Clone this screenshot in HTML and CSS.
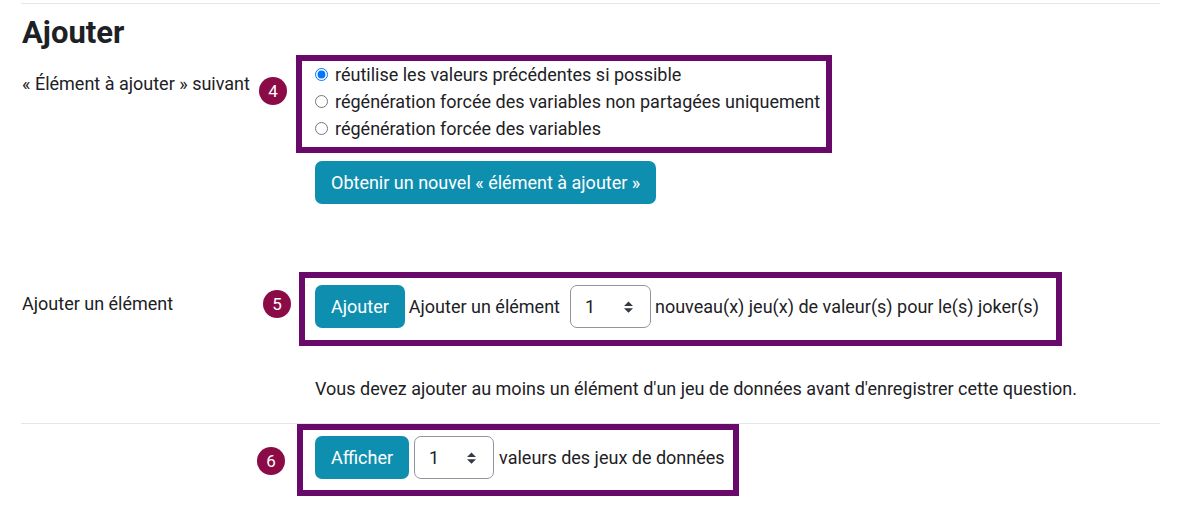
FILE: index.html
```html
<!DOCTYPE html>
<html lang="fr">
<head>
<meta charset="utf-8">
<title>Ajouter</title>
<link rel="stylesheet" href="styles.css">
</head>
<body>
<div class="page">
  <div class="topline"></div>
  <h2 class="title">Ajouter</h2>

  <div class="field-row row-next">
    <div class="field-label">« Élément à ajouter » suivant</div>
    <div class="badge badge-4">4</div>
    <div class="field-content">
      <div class="callout callout-radios">
        <label class="radio-row"><input type="radio" name="next" checked><span>réutilise les valeurs précédentes si possible</span></label>
        <label class="radio-row"><input type="radio" name="next"><span>régénération forcée des variables non partagées uniquement</span></label>
        <label class="radio-row"><input type="radio" name="next"><span>régénération forcée des variables</span></label>
      </div>
      <button class="btn btn-get">Obtenir un nouvel « élément à ajouter »</button>
    </div>
  </div>

  <div class="field-row row-add">
    <div class="field-label">Ajouter un élément</div>
    <div class="badge badge-5">5</div>
    <div class="field-content">
      <div class="callout callout-add">
        <button class="btn">Ajouter</button>
        <span class="inline-text text-gap">Ajouter un élément</span>
        <div class="fake-select">
          <span>1</span>
          <svg class="caret" width="9" height="12" viewBox="0 0 4 5"><path d="M2 0L0 2h4zm0 5L0 3h4z" fill="#343a40"/></svg>
        </div>
        <span class="inline-text">nouveau(x) jeu(x) de valeur(s) pour le(s) joker(s)</span>
      </div>
      <p class="notice">Vous devez ajouter au moins un élément d'un jeu de données avant d'enregistrer cette question.</p>
    </div>
  </div>

  <div class="divider"></div>

  <div class="field-row row-show">
    <div class="field-label"></div>
    <div class="badge badge-6">6</div>
    <div class="field-content">
      <div class="callout callout-show">
        <button class="btn">Afficher</button>
        <div class="fake-select fake-select-narrow">
          <span>1</span>
          <svg class="caret" width="9" height="12" viewBox="0 0 4 5"><path d="M2 0L0 2h4zm0 5L0 3h4z" fill="#343a40"/></svg>
        </div>
        <span class="inline-text">valeurs des jeux de données</span>
      </div>
    </div>
  </div>
</div>
</body>
</html>
```

FILE: styles.css
```css
* {
  box-sizing: border-box;
}

html, body {
  margin: 0;
  padding: 0;
  background: #ffffff;
}

body {
  font-family: Roboto, "Liberation Sans", Arial, sans-serif;
  font-size: 18px;
  line-height: 24px;
  color: #1d2125;
}

.page {
  padding: 3px 40px 0 21px;
}

.topline {
  border-top: 1px solid #e4e6e8;
}

.title {
  margin: 10px 0 4px 1px;
  font-size: 31px;
  line-height: 37px;
  font-weight: 700;
  color: #1d2125;
}

.field-row {
  display: flex;
  align-items: flex-start;
}

.field-label {
  width: 238px;
  flex: 0 0 238px;
  padding-left: 1px;
}

.row-next .field-label {
  padding-top: 17px;
}

.row-add .field-label {
  padding-top: 20px;
}

.badge {
  flex: 0 0 28px;
  width: 28px;
  height: 28px;
  border-radius: 50%;
  background: #8b0b47;
  color: #ffffff;
  font-size: 17px;
  line-height: 28px;
  text-align: center;
}

.badge-4 {
  margin-top: 22px;
}

.badge-5 {
  margin-top: 18px;
  margin-left: 4px;
}

.badge-6 {
  margin-top: 23px;
  margin-left: -2px;
}

.field-content {
  display: flex;
  flex-direction: column;
  align-items: flex-start;
}

.callout {
  border: 6px solid #690a6b;
  background: #ffffff;
}

.callout-radios {
  margin-left: 9px;
  padding: 0 6px 5px 13px;
}

.radio-row {
  display: flex;
  align-items: center;
  height: 27px;
}

.radio-row input {
  margin: 0 7px 0 0;
  width: 13px;
  height: 13px;
}

.btn {
  border: 0;
  border-radius: 7px;
  background: #0f8fb0;
  color: #ffffff;
  font-family: inherit;
  font-size: 18px;
  line-height: 25px;
  padding: 9px 16px;
  height: 43px;
  cursor: pointer;
}

.btn-get {
  margin-top: 8px;
  margin-left: 28px;
}

.row-add {
  margin-top: 68px;
}

.callout-add {
  margin-left: 8px;
  padding: 7px 17px 12px 10px;
  display: flex;
  align-items: center;
  gap: 4px;
}

.inline-text {
  white-space: nowrap;
}

.text-gap {
  margin-right: 6px;
}

.fake-select {
  display: flex;
  align-items: center;
  justify-content: space-between;
  width: 81px;
  height: 43px;
  padding: 0 17px 0 14px;
  border: 1px solid #8f959e;
  border-radius: 7px;
  background: #ffffff;
  color: #1d2125;
}

.fake-select-narrow {
  width: 80px;
}

.caret {
  display: block;
}

.notice {
  margin: 31px 0 0 24px;
}

.divider {
  margin-top: 22px;
  border-top: 1px solid #e4e6e8;
}

.callout-show {
  margin-left: 12px;
  padding: 6px 8px 11px 12px;
  display: flex;
  align-items: center;
  gap: 5px;
}
```
